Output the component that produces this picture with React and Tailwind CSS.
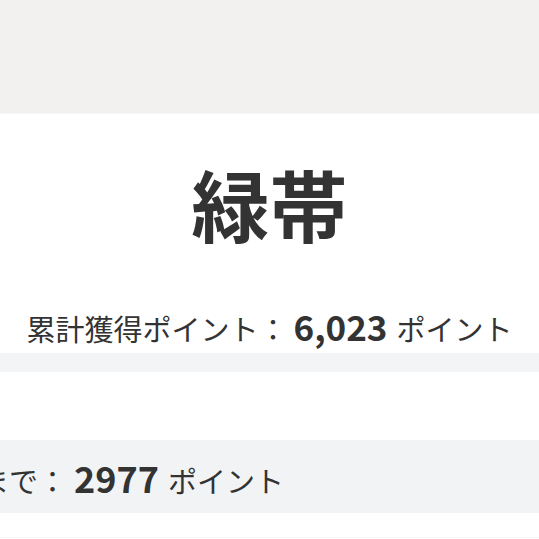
export default function App() {
  return (
    <div className="w-[539px] h-[539px] overflow-hidden bg-white text-[#333] font-['Noto_Sans_CJK_JP','Noto_Sans',sans-serif]">
      {/* Header band */}
      <div className="h-[114px] bg-[#f2f1ef] border-b border-[#f6f5f4]" />

      {/* Belt */}
      <div className="pt-[50px] flex flex-col items-center">
        <h1 className="text-[78px] font-bold leading-none">緑帯</h1>
        <p className="mt-[66px] flex items-baseline whitespace-nowrap text-[29px] leading-none">
          <span>累計獲得ポイント：</span>
          <span className="ml-[6px] mr-[9px] text-[35px] font-bold">6,023</span>
          <span>ポイント</span>
        </p>
      </div>

      <div className="mt-[10px] h-[19px] bg-[#f3f4f6]" />

      <div className="h-[68px]" />

      {/* Next belt */}
      <div className="h-[73px] bg-[#f2f3f5] flex items-center overflow-hidden">
        <p className="-ml-[107px] pt-[1px] flex items-baseline whitespace-nowrap text-[29px] leading-none">
          <span>次の帯まで：</span>
          <span className="ml-[7px] mr-[9px] text-[36px] font-bold">2977</span>
          <span>ポイント</span>
        </p>
      </div>

      <div className="h-[24px]" />
      <div className="h-px bg-[#f6f6f7]" />
    </div>
  )
}
